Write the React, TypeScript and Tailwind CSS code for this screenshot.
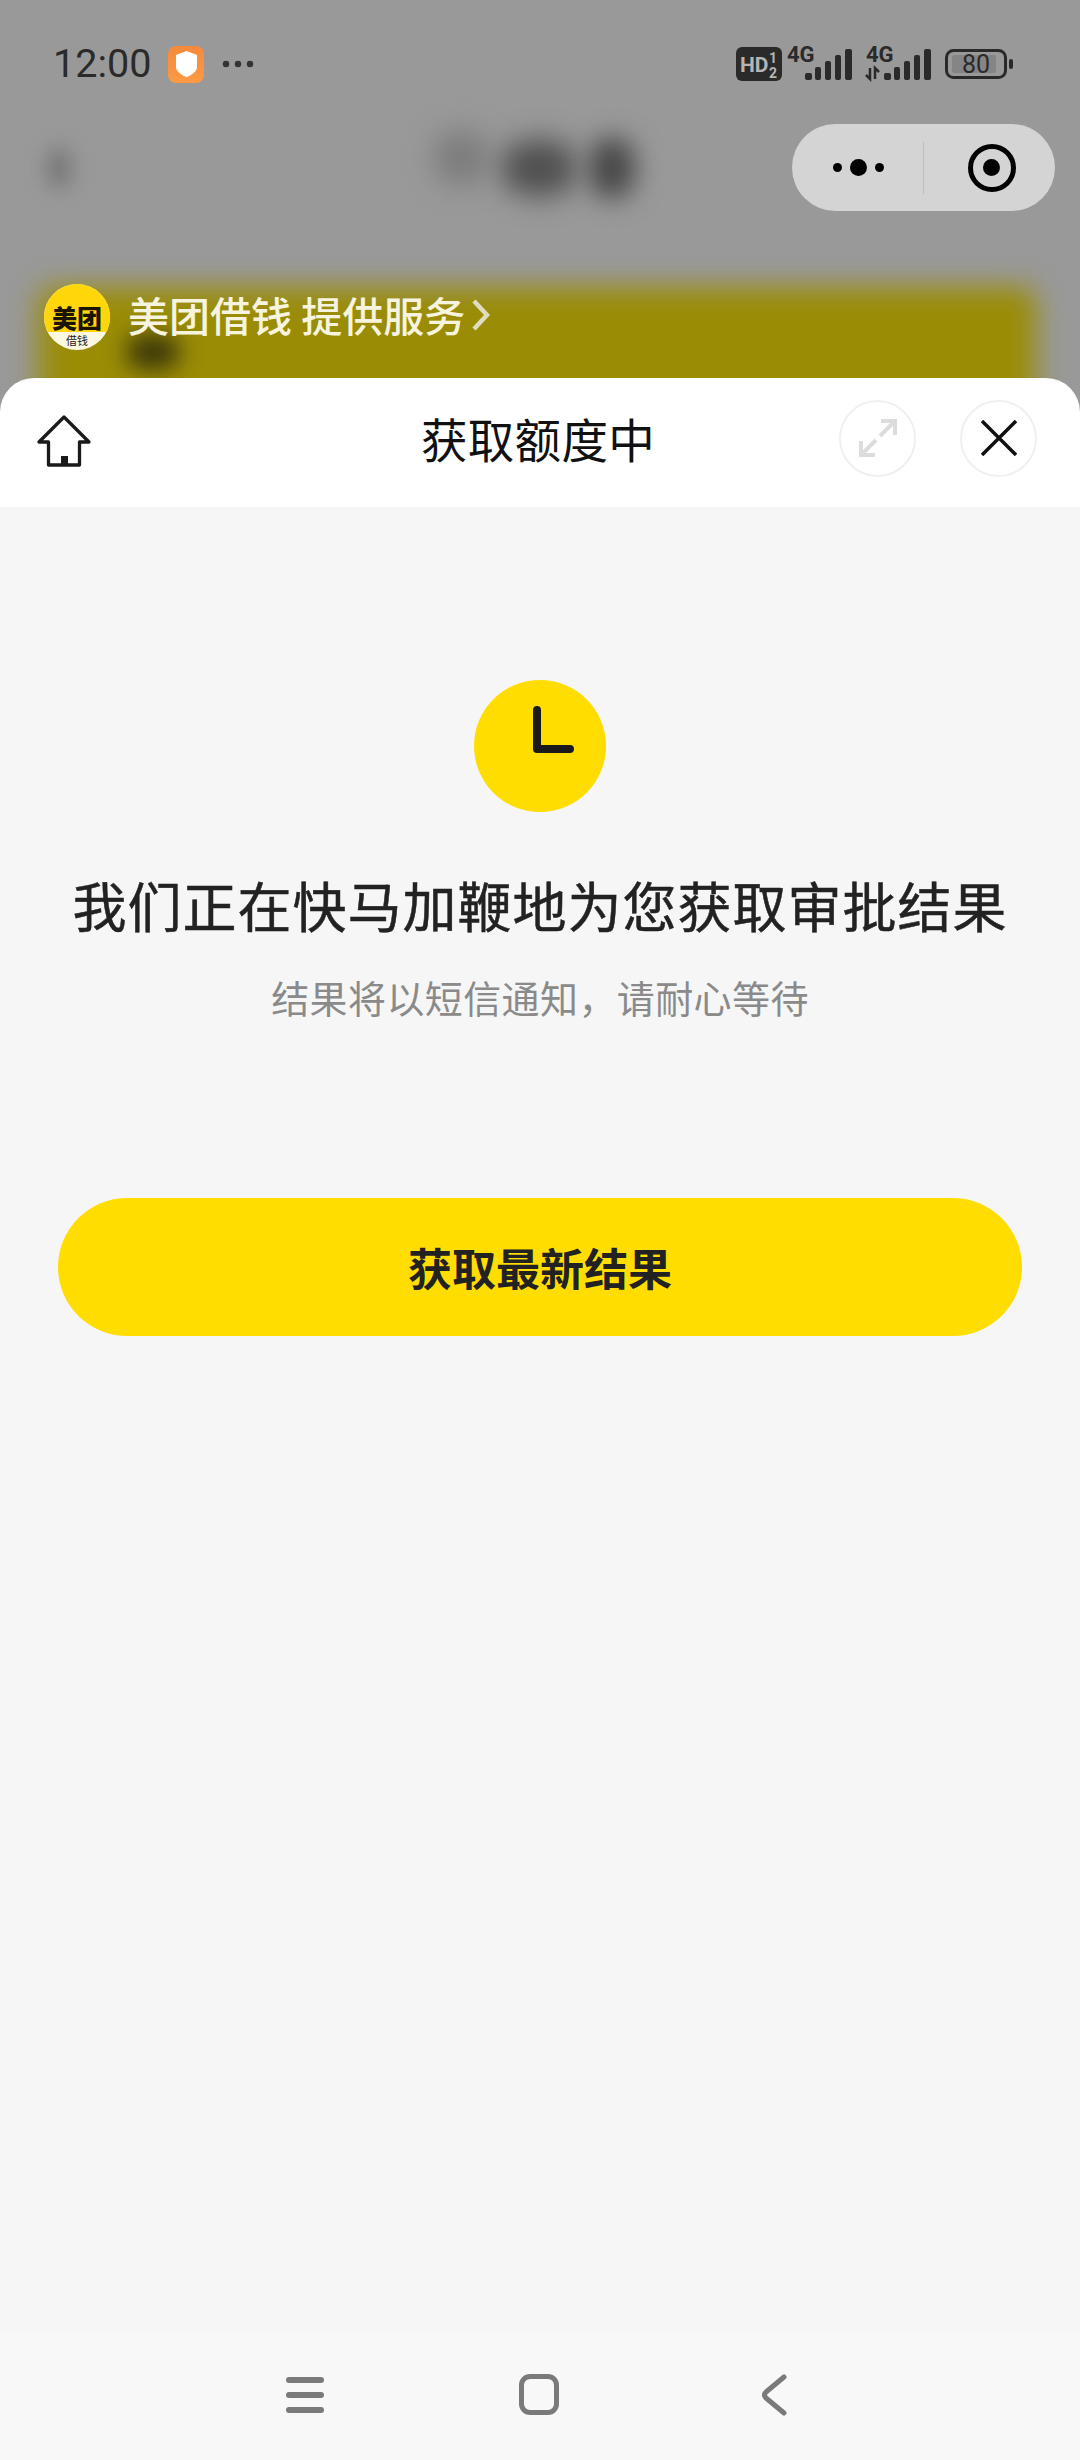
const cjk = "font-['Noto_Sans_CJK_SC','Noto_Sans',sans-serif]";
const roboto = "Roboto, sans-serif";

function StatusIcons() {
  return (
    <svg width="278" height="48" viewBox="0 0 278 48" fill="#2a2a2a">
      <rect x="0" y="7" width="46" height="34" rx="6" />
      <text x="4" y="32" fontSize="21" fontWeight="700" fill="#b5b5b5" fontFamily={roboto}>HD</text>
      <text x="33" y="23" fontSize="14" fontWeight="700" fill="#b5b5b5" fontFamily={roboto}>1</text>
      <text x="33" y="38" fontSize="14" fontWeight="700" fill="#b5b5b5" fontFamily={roboto}>2</text>
      <text x="51" y="22" fontSize="22" fontWeight="700" fontFamily={roboto}>4G</text>
      <rect x="69" y="33" width="7" height="7" rx="2" />
      <rect x="79" y="27" width="6" height="13" rx="2" />
      <rect x="89" y="21" width="6" height="19" rx="2" />
      <rect x="99" y="15" width="6" height="25" rx="2" />
      <rect x="109" y="9" width="7" height="31" rx="2" />
      <text x="130" y="22" fontSize="22" fontWeight="700" fontFamily={roboto}>4G</text>
      <path d="M134 28v11l-4-4M139 39V28l4 4" fill="none" stroke="#2a2a2a" strokeWidth="2.500" />
      <rect x="148" y="33" width="7" height="7" rx="2" />
      <rect x="158" y="27" width="6" height="13" rx="2" />
      <rect x="168" y="21" width="6" height="19" rx="2" />
      <rect x="178" y="15" width="6" height="25" rx="2" />
      <rect x="188" y="9" width="7" height="31" rx="2" />
      <rect x="210.500" y="10.500" width="59" height="27" rx="7" fill="none" stroke="#2a2a2a" strokeWidth="3" />
      <rect x="216" y="15" width="44" height="18" rx="2" fill="#858585" />
      <text x="240" y="33" fontSize="25" textAnchor="middle" fontFamily={roboto}>80</text>
      <rect x="273" y="19" width="4" height="10" rx="2" />
    </svg>
  );
}

function Backdrop() {
  return (
    <div className="relative h-[412px] overflow-hidden bg-[#999999]">
      <div className="flex h-[124px] items-start justify-between pl-[53px] pr-[66px] pt-[40px]">
        <div className="mt-[4px] flex items-center">
          <span className="w-[100px] font-['Roboto',sans-serif] text-[39.500px] leading-[40px] text-[#2a2a2a]">12:00</span>
          <div className="ml-[15px] flex h-[37px] w-[36px] items-center justify-center rounded-[8px] bg-gradient-to-b from-[#f58a3c] to-[#fb9a45]">
            <svg width="21" height="26" viewBox="0 0 21 26">
              <path d="M10.5 0 21 4v12c0 4-5 8-10.5 10C5 24 0 20 0 16V4Z" fill="#fff" />
            </svg>
          </div>
          <svg className="ml-[18px]" width="32" height="8" viewBox="0 0 32 8" fill="#333">
            <circle cx="4" cy="4" r="3.200" />
            <circle cx="16" cy="4" r="3.200" />
            <circle cx="28" cy="4" r="3.200" />
          </svg>
        </div>
        <StatusIcons />
      </div>
      <div className="flex h-[87px] items-center justify-between pl-[47px] pr-[25px]">
        <div className="h-[40px] w-[24px] rounded-full bg-[#777777] blur-[10px]" />
        <div className="ml-[205px] flex items-center gap-[12px]">
          <div className="-mt-[20px] h-[56px] w-[56px] rounded-full bg-[#7c7c7c] blur-[14px]" />
          <div className="h-[56px] w-[76px] rounded-full bg-[#505050] blur-[14px]" />
          <div className="h-[62px] w-[46px] rounded-full bg-[#484848] blur-[13px]" />
        </div>
        <div className="flex h-[87px] w-[263px] items-center rounded-full bg-[#d4d4d4]">
          <div className="flex w-[131px] items-center justify-center gap-[8px] pl-[2px]">
            <div className="h-[9px] w-[9px] rounded-full bg-black" />
            <div className="h-[17px] w-[17px] rounded-full bg-black" />
            <div className="h-[9px] w-[9px] rounded-full bg-black" />
          </div>
          <div className="h-[52px] w-px bg-[#bdbdbd]" />
          <div className="flex flex-1 items-center justify-center pl-[4px]">
            <div className="flex h-[48px] w-[48px] items-center justify-center rounded-full border-[5px] border-black">
              <div className="h-[17px] w-[17px] rounded-full bg-black" />
            </div>
          </div>
        </div>
      </div>
      <div className="ml-[38px] mr-[44px] mt-[76px] h-[200px] rounded-[16px] bg-[#9a8c05] blur-[14px]" />
      <div className="absolute left-[126px] top-[334px] h-[36px] w-[54px] rounded-full bg-[#3f3a0a] blur-[11px]" />
      <div className="absolute left-[44px] top-[284px] flex items-center">
        <div className="flex h-[66px] w-[66px] flex-col overflow-hidden rounded-full bg-[#fdf8e2]">
          <div className={`${cjk} flex h-[48px] items-end justify-center bg-[#ffd60a] pb-[2px] text-[25px] font-black leading-none text-[#1a1400]`}>美团</div>
          <div className={`${cjk} text-center text-[11px] leading-[16px] text-[#222222]`}>借钱</div>
        </div>
        <div className={`${cjk} mb-[5px] ml-[18px] whitespace-pre text-[41px] font-medium leading-none text-[#f6f3df]`}>美团借钱 提供服务</div>
        <svg className="mb-[4px] ml-[7px]" width="18" height="34" viewBox="0 0 18 34" fill="none" stroke="#dfddc0" strokeWidth="4.500">
          <path d="M2 3l13 14L2 31" />
        </svg>
      </div>
    </div>
  );
}

function SheetHeader() {
  return (
    <div className="relative -mt-[34px] flex h-[129px] items-center rounded-t-[34px] bg-white">
      <div className="mb-[3px] flex flex-1 items-center pl-[37px]">
        <svg width="54" height="52" viewBox="0 0 54 52" fill="none" stroke="#1a1a1a" strokeWidth="3.300" strokeLinejoin="round">
          <path d="M27 2 2 27h9.500v23h31V27H52Z" />
          <rect x="24" y="41" width="7" height="9" fill="#1a1a1a" stroke="none" />
        </svg>
      </div>
      <div className={`${cjk} mb-[8px] pl-[2px] text-[46.500px] leading-none tracking-[0.3px] text-[#111111]`}>获取额度中</div>
      <div className="mb-[9px] flex flex-1 items-center justify-end pr-[43px]">
        <div className="flex h-[77px] w-[77px] items-center justify-center rounded-full border-2 border-[#f0f0f0]">
          <svg width="38" height="38" viewBox="0 0 38 38" fill="none" stroke="#dcdcdc" strokeWidth="4">
            <path d="M21 17 36 2M22 2h14v14M17 21 2 36M2 22v14h14" />
          </svg>
        </div>
        <div className="ml-[44px] flex h-[77px] w-[77px] items-center justify-center rounded-full border-2 border-[#f0f0f0]">
          <svg width="36" height="36" viewBox="0 0 36 36" fill="none" stroke="#111111" strokeWidth="3.500">
            <path d="M1 1l34 34M35 1 1 35" />
          </svg>
        </div>
      </div>
    </div>
  );
}

function NavBar() {
  return (
    <div className="flex h-[128px] items-start bg-[#f8f8f8] pl-[286px] pt-[42px]">
      <div className="mt-[3px] flex w-[38px] flex-col gap-[9px]">
        <div className="h-[6px] rounded-full bg-[#7a7a7a]" />
        <div className="h-[6px] rounded-full bg-[#7a7a7a]" />
        <div className="h-[6px] rounded-full bg-[#7a7a7a]" />
      </div>
      <div className="ml-[195px] h-[41px] w-[40px] rounded-[11px] border-[5px] border-[#7a7a7a]" />
      <svg className="ml-[202px]" width="26" height="42" viewBox="0 0 26 42" fill="none" stroke="#7a7a7a" strokeWidth="5" strokeLinecap="round" strokeLinejoin="round">
        <path d="M23 3 5 18c-2 2-2 4 0 6l18 15" />
      </svg>
    </div>
  );
}

export default function App() {
  return (
    <div className="flex h-[2460px] w-[1080px] flex-col overflow-hidden bg-[#f6f6f6]">
      <Backdrop />
      <SheetHeader />
      <div className="flex flex-1 flex-col items-center px-[58px] pt-[173px]">
        <div className="flex h-[132px] w-[132px] items-center justify-center rounded-full bg-[#ffdd00]">
          <svg width="132" height="132" viewBox="0 0 132 132" fill="none" stroke="#1a1a1a" strokeWidth="8" strokeLinecap="round" strokeLinejoin="round">
            <path d="M63 30v39h33" />
          </svg>
        </div>
        <h1 className={`${cjk} mt-[58px] whitespace-nowrap text-[54px] font-normal leading-[70px] tracking-[1px] text-[#222222] [-webkit-text-stroke:0.5px_#222222]`}>我们正在快马加鞭地为您获取审批结果</h1>
        <p className={`${cjk} mt-[32px] text-[38px] leading-[50px] tracking-[0.4px] text-[#8a8a8a]`}>结果将以短信通知，请耐心等待</p>
        <button className={`${cjk} mt-[176px] h-[138px] w-full rounded-full bg-[#ffdd00] text-[44px] font-bold text-[#222222]`}>获取最新结果</button>
      </div>
      <NavBar />
    </div>
  );
}
